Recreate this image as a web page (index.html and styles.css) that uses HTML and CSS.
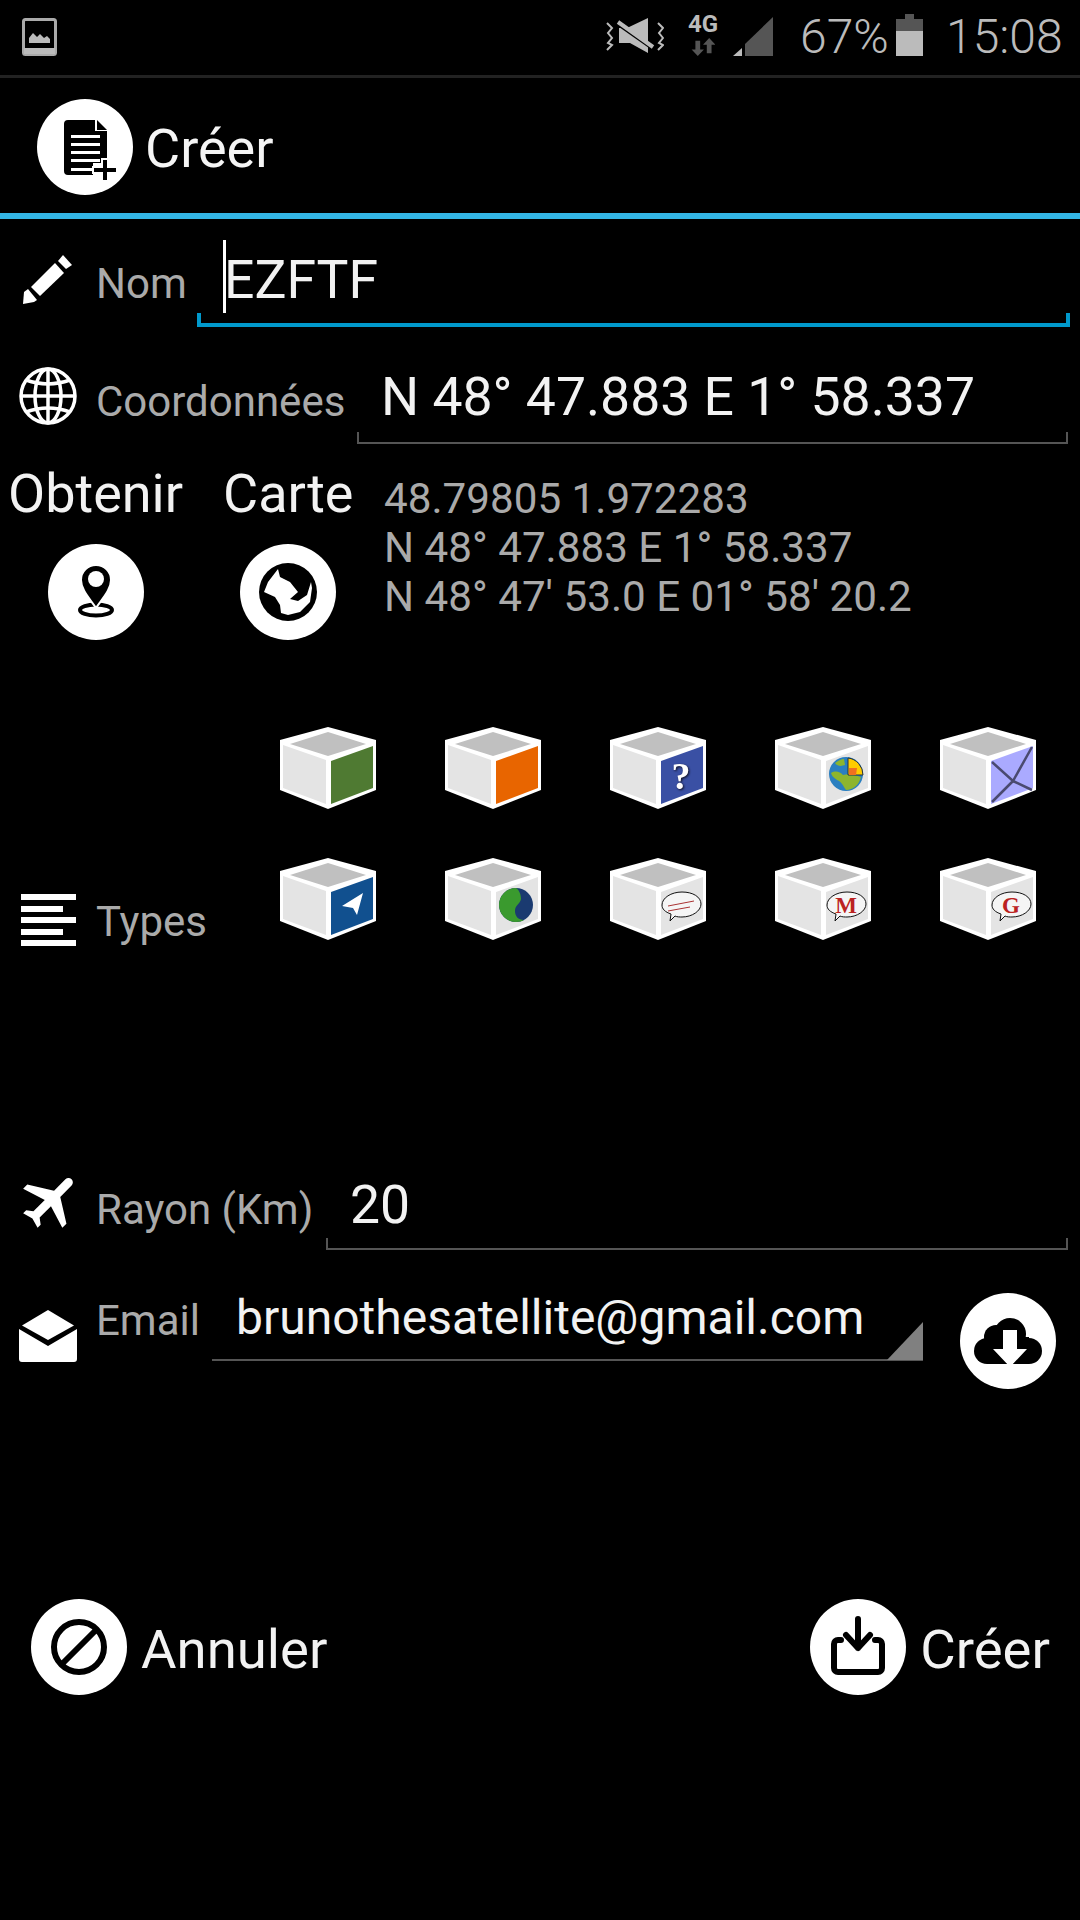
FILE: index.html
```html
<!DOCTYPE html>
<html lang="fr">
<head>
<meta charset="utf-8">
<title>Créer</title>
<link rel="stylesheet" href="styles.css">
</head>
<body>
<svg class="defs" width="0" height="0">
  <symbol id="cube" viewBox="0 0 96 82">
    <polygon class="c-edge" points="0,13 48,0 96,13 96,63 48,82 0,63"/>
    <polygon class="c-top" points="48,5 86,17 48,29 10,17"/>
    <polygon class="c-left" points="3,18 46,33 46,77 3,61"/>
  </symbol>
</svg>
<div class="app">
  <div class="status">
    <svg class="st-image" viewBox="0 0 35 38"><rect x="1.500" y="1.500" width="32" height="35" rx="2" class="st-stroke"/><rect x="2" y="30" width="31" height="6" class="st-fill"/><path class="st-fill" d="M7 25v-5l4-5 4 4 3-3 4 4 3-2 3 3v4z"/></svg>
    <svg class="st-mute" viewBox="0 0 60 40"><polygon class="st-fill" points="15,12 23,12 44,2 44,37 26,27 15,27"/><line x1="12" y1="7" x2="49" y2="33" class="st-gap"/><line x1="14" y1="6" x2="49" y2="31" class="st-line"/><polyline class="st-wave" points="3,7 8,12 4,17 8,22 4,27 8,29 3,34"/><polyline class="st-wave" points="54,7 59,12 55,17 59,22 55,27 59,29 54,34"/></svg>
    <div class="st-net">
      <span class="st-4g">4G</span>
      <svg class="st-arrows" viewBox="0 0 24 20"><path class="st-dark" d="M4 3h5v9h4l-6.500 7L0 12h4z"/><path class="st-dark" d="M16 16h5V7h4l-6.500-7L12 7h4z"/></svg>
    </div>
    <svg class="st-signal" viewBox="0 0 40 40"><polygon class="st-fill" points="0,39 9,31 9,39"/><polygon class="st-dark" points="12,39 12,27 40,0 40,39"/></svg>
    <span class="st-text st-pct">67%</span>
    <svg class="st-batt" viewBox="0 0 27 42"><rect x="9" y="0" width="9" height="6" class="st-dark"/><rect x="0" y="5" width="27" height="12" class="st-dark"/><rect x="0" y="17" width="27" height="25" class="st-fill"/></svg>
    <span class="st-text st-time">15:08</span>
  </div>

  <header class="header">
    <svg class="circle" viewBox="0 0 96 96"><path class="k-fill" d="M31 21h27v11h12v32H56v12H31a4 4 0 0 1-4-4V25a4 4 0 0 1 4-4z"/><path class="k-fill" d="M60 21l10 10H60z"/><g class="w-bars"><rect x="34" y="36" width="29" height="3"/><rect x="34" y="44" width="29" height="3"/><rect x="34" y="52" width="29" height="3"/><rect x="34" y="60" width="29" height="3"/><rect x="34" y="69" width="22" height="3"/></g><path class="k-plus" d="M65 60h6v8h9v6h-9v8h-6v-8h-9v-6h9z"/></svg>
    <span class="title">Créer</span>
  </header>

  <div class="row row-nom">
    <div class="icon-cell ic-nom"><svg class="i-pencil" viewBox="0 0 50 50"><path class="w-fill" d="M0 49l1-12 4-3 9 11-3 2z"/><path class="w-fill" d="M8 32L32 8l9 10-24 23z"/><path class="w-fill" d="M35 6l5-6 9 10-6 4z"/></svg></div>
    <span class="label lb-nom">Nom</span>
    <div class="field focus fd-nom"><i class="caret"></i>EZFTF</div>
  </div>

  <div class="row row-coord">
    <div class="icon-cell ic-coord"><svg class="i-globe" viewBox="0 0 58 58"><g class="w-wire"><circle cx="29" cy="29" r="27"/><ellipse cx="29" cy="29" rx="13" ry="27"/><line x1="29" y1="2" x2="29" y2="56"/><line x1="2" y1="29" x2="56" y2="29"/><path d="M7 13c14 5 30 5 44 0M7 45c14-5 30-5 44 0"/></g></svg></div>
    <span class="label lb-coord">Coordonnées</span>
    <div class="field fd-coord">N 48° 47.883 E 1° 58.337</div>
  </div>

  <div class="row row-action">
    <div class="act act-1">
      <span class="act-text">Obtenir</span>
      <svg class="circle" viewBox="0 0 96 96"><ellipse class="k-ring" cx="48" cy="66" rx="16" ry="5.500"/><path class="k-pin" d="M48 64C42 55 33 46 33 36a15 15 0 0 1 30 0c0 10-9 19-15 28z"/><circle cx="48" cy="35" r="8" class="w-fill"/></svg>
    </div>
    <div class="act act-2">
      <span class="act-text">Carte</span>
      <svg class="circle" viewBox="0 0 96 96"><circle cx="48" cy="48" r="29" class="k-fill"/><path class="w-fill" d="M38 25l2 8 10 5 8 10-8 7 8 2 9-6 4-13 1 6-2 14-10 10-12 3-7-2-1-8-5-8-11-5 4-10z"/></svg>
    </div>
    <div class="coord-list">
      <span>48.79805 1.972283</span>
      <span>N 48° 47.883 E 1° 58.337</span>
      <span>N 48° 47' 53.0 E 01° 58' 20.2</span>
    </div>
  </div>

  <div class="row row-types">
    <div class="icon-cell ic-types"><svg class="i-lines" viewBox="0 0 55 52"><g class="w-fill"><rect width="55" height="6" y="0"/><rect width="42" height="6" y="12"/><rect width="55" height="6" y="23"/><rect width="42" height="6" y="35"/><rect width="55" height="6" y="46"/></g></svg></div>
    <span class="label lb-types">Types</span>
    <div class="cubes">
      <svg class="cube" viewBox="0 0 96 82"><use href="#cube"/><polygon class="f-green" points="51,34 93,19 93,61 51,77"/></svg>
      <svg class="cube" viewBox="0 0 96 82"><use href="#cube"/><polygon class="f-orange" points="51,34 93,19 93,61 51,77"/></svg>
      <svg class="cube" viewBox="0 0 96 82"><use href="#cube"/><polygon class="f-indigo" points="51,34 93,19 93,61 51,77"/><text class="t-q" x="71" y="62">?</text></svg>
      <svg class="cube" viewBox="0 0 96 82"><use href="#cube"/><polygon class="c-left" points="51,34 93,19 93,61 51,77"/><circle cx="71" cy="47" r="17" class="g-sea"/><path class="g-land" d="M56 46c5-3 9-1 12 2 6-2 12 0 18 2-2 8-8 13-15 13-3-4-4-8-9-10-2-2-5-3-6-7z"/><path class="g-land" d="M60 36c3-2 6-4 9-4l1 6c-3 1-7 2-10-2z"/><path class="g-pie" d="M73 31a17 17 0 0 1 15 17H73z"/><path class="g-slice" d="M74 41h8l-1 7h-7z"/></svg>
      <svg class="cube" viewBox="0 0 96 82"><use href="#cube"/><polygon class="f-lilac" points="51,34 93,19 93,61 51,77"/><path class="m-line" d="M52 35l21 19L92 20M73 54L52 75M73 54l19 9"/></svg>
      <svg class="cube" viewBox="0 0 96 82"><use href="#cube"/><polygon class="f-blue" points="51,34 93,19 93,61 51,77"/><polygon class="w-fill" points="62,48 83,35 77,57 73,50"/></svg>
      <svg class="cube" viewBox="0 0 96 82"><use href="#cube"/><polygon class="c-left" points="51,34 93,19 93,61 51,77"/><circle cx="71" cy="47" r="17" class="y-navy"/><path class="y-green" d="M71 30a17 17 0 0 0 0 34c4 0 6-1 8-2-6 0-9-4-9-9 0-6 5-7 6-12 0-5-2-9-5-11z"/></svg>
      <svg class="cube soft" viewBox="0 0 96 82"><use href="#cube"/><polygon class="c-left" points="51,34 93,19 93,61 51,77"/><path class="b-bubble" d="M52 47c0-7 9-13 20-13s19 5 19 12-9 13-19 13c-2 0-5 0-7-1l-5 5 1-7c-6-2-9-5-9-9z"/><path class="b-red" d="M58 48l26-5M58 53l22-4"/></svg>
      <svg class="cube soft" viewBox="0 0 96 82"><use href="#cube"/><polygon class="c-left" points="51,34 93,19 93,61 51,77"/><path class="b-bubble" d="M52 47c0-7 9-13 20-13s19 5 19 12-9 13-19 13c-2 0-5 0-7-1l-5 5 1-7c-6-2-9-5-9-9z"/><text class="t-b" x="71" y="55">M</text></svg>
      <svg class="cube soft" viewBox="0 0 96 82"><use href="#cube"/><polygon class="c-left" points="51,34 93,19 93,61 51,77"/><path class="b-bubble" d="M52 47c0-7 9-13 20-13s19 5 19 12-9 13-19 13c-2 0-5 0-7-1l-5 5 1-7c-6-2-9-5-9-9z"/><text class="t-b" x="71" y="55">G</text></svg>
    </div>
  </div>

  <div class="row row-rayon">
    <div class="icon-cell ic-rayon"><svg class="i-plane" viewBox="0 0 24 24"><path class="w-fill plane" d="M21 16v-2l-8-5V3.500c0-.83-.67-1.500-1.500-1.500S10 2.670 10 3.500V9l-8 5v2l8-2.500V19l-2 1.500V22l3.500-1 3.500 1v-1.500L13 19v-5.500l8 2.500z"/></svg></div>
    <span class="label lb-rayon">Rayon (Km)</span>
    <div class="field fd-rayon">20</div>
  </div>

  <div class="row row-email">
    <div class="icon-cell ic-email"><svg class="i-env" viewBox="0 0 58 52"><path class="w-fill" d="M3 15.500L29 0l26 15.500L29 30z"/><path class="w-fill" d="M0 19l29 17 29-17v30a3 3 0 0 1-3 3H3a3 3 0 0 1-3-3z"/></svg></div>
    <span class="label lb-email">Email</span>
    <div class="field fd-email">brunothesatellite@gmail.com</div>
    <svg class="circle cloud" viewBox="0 0 96 96"><g class="k-fill"><circle cx="27" cy="58" r="13"/><circle cx="36" cy="44" r="12"/><circle cx="50" cy="41" r="16"/><circle cx="69" cy="58" r="13"/><rect x="27" y="44" width="42" height="27"/></g><path class="w-fill" d="M43 37h14v19h10L50 74 33 56h10z"/></svg>
  </div>

  <div class="row row-bottom">
    <div class="btn">
      <svg class="circle" viewBox="0 0 96 96"><circle cx="48" cy="48" r="25" class="k-stroke"/><line x1="30" y1="66" x2="66" y2="30" class="k-stroke"/></svg>
      <span class="btn-text">Annuler</span>
    </div>
    <div class="btn">
      <svg class="circle" viewBox="0 0 96 96"><path class="k-stroke round" d="M31 41h-3a4 4 0 0 0-4 4v24a4 4 0 0 0 4 4h40a4 4 0 0 0 4-4V45a4 4 0 0 0-4-4h-3"/><path class="k-stroke round" d="M48 20v29M36 36l12 13 12-13"/></svg>
      <span class="btn-text">Créer</span>
    </div>
  </div>
</div>
</body>
</html>
```

FILE: styles.css
```css
* { box-sizing: border-box; }
html, body { margin: 0; padding: 0; background: #000; }
body { font-family: Roboto, "Noto Sans", sans-serif; color: #f2f2f2; }
.defs { position: absolute; }
.app { width: 1080px; height: 1920px; display: flex; flex-direction: column; background: #000; overflow: hidden; }

/* status bar */
.status { height: 78px; border-bottom: 3px solid #222; display: flex; align-items: flex-start; position: relative; flex: none; padding-left: 22px; }
.st-image { width: 35px; height: 38px; margin-top: 18px; margin-right: 547px; flex: none; }
.st-mute { width: 60px; height: 40px; margin-top: 16px; margin-right: 21px; flex: none; }
.st-net { display: flex; flex-direction: column; align-items: center; width: 36px; margin-top: 12px; margin-right: 12px; flex: none; }
.st-4g { font-size: 24px; font-weight: 700; line-height: 25px; color: #bbb; }
.st-arrows { width: 24px; height: 19px; margin-top: 1px; }
.st-signal { width: 40px; height: 40px; margin-top: 17px; margin-right: 27px; flex: none; }
.st-text { font-size: 48px; font-weight: 300; line-height: 56px; color: #bbb; margin-top: 9px; white-space: nowrap; }
.st-pct { width: 96px; }
.st-batt { width: 27px; height: 42px; margin-top: 14px; margin-right: 23px; flex: none; }
.st-fill { fill: #bbb; }
.st-dark { fill: #555; }
.st-stroke { fill: none; stroke: #aaa; stroke-width: 3; }
.st-line { stroke: #bbb; stroke-width: 4; }
.st-gap { stroke: #000; stroke-width: 3; }
.st-wave { fill: none; stroke: #bbb; stroke-width: 2; }

/* header */
.header { height: 141px; border-bottom: 6px solid #33b5e5; display: flex; align-items: flex-start; padding-left: 37px; flex: none; }
.header .circle { margin-top: 21px; }
.circle { width: 96px; height: 96px; background: #fff; border-radius: 50%; flex: none; display: block; }
.title { font-size: 54px; line-height: 60px; margin-top: 41px; margin-left: 12px; color: #f5f5f5; }

/* shapes */
.k-fill { fill: #000; }
.w-fill { fill: #fff; }
.w-bars { fill: #fff; }
.k-plus { fill: #000; stroke: #fff; stroke-width: 2; }
.w-wire { fill: none; stroke: #fff; stroke-width: 3.500; }
.k-ring { fill: none; stroke: #000; stroke-width: 4; }
.k-pin { fill: #000; stroke: #fff; stroke-width: 2; }
.k-stroke { fill: none; stroke: #000; stroke-width: 6; }
.round { stroke-linecap: round; stroke-linejoin: round; }

/* rows */
.row { display: flex; align-items: flex-start; flex: none; }
.icon-cell { width: 96px; display: flex; justify-content: center; flex: none; }
.label { font-size: 42px; line-height: 60px; color: #aaa; white-space: nowrap; flex: none; }
.field { position: relative; font-size: 53.500px; line-height: 60px; color: #f2f2f2; padding-bottom: 13px; border-bottom: 2px solid #555; white-space: nowrap; flex: none; height: 75px; }
.field::before, .field::after { content: ""; position: absolute; bottom: 0; width: 2px; height: 10px; background: #555; }
.field::before { left: 0; }
.field::after { right: 0; }
.focus { border-bottom: 4px solid #09c; height: 77px; }
.focus::before, .focus::after { width: 4px; background: #09c; }
.caret { position: absolute; left: 26px; top: -10px; width: 3px; height: 73px; background: #fff; }

.row-nom { height: 112px; }
.ic-nom { margin-top: 36px; }
.i-pencil { width: 50px; height: 50px; }
.lb-nom { width: 101px; margin-top: 35px; }
.fd-nom { width: 873px; margin-top: 31px; padding-left: 27px; }

.row-coord { height: 116px; }
.ic-coord { margin-top: 36px; }
.i-globe { width: 58px; height: 58px; }
.lb-coord { width: 261px; margin-top: 41px; }
.fd-coord { width: 711px; margin-top: 36px; padding-left: 24px; height: 77px; padding-bottom: 15px; }

.row-action { height: 191px; padding-left: 8px; padding-top: 17px; }
.act { display: flex; flex-direction: column; flex: none; }
.act-text { font-size: 54px; line-height: 60px; white-space: nowrap; margin-bottom: 20px; color: #f2f2f2; }
.act-1 { width: 215px; }
.act-1 .circle { margin-left: 40px; }
.act-2 { width: 161px; }
.act-2 .circle { margin-left: 17px; }
.coord-list { display: flex; flex-direction: column; font-size: 42.200px; line-height: 49px; color: #aaa; margin-top: 10px; white-space: nowrap; }

.row-types { margin-top: 89px; height: 213px; }
.ic-types { margin-top: 167px; }
.i-lines { width: 55px; height: 52px; }
.lb-types { width: 184px; margin-top: 165px; }
.cubes { display: grid; grid-template-columns: repeat(5, 96px); column-gap: 69px; row-gap: 49px; }
.cube { width: 96px; height: 82px; display: block; }
.c-edge { fill: #fff; }
.soft .c-edge { fill: #f2f2f2; }
.c-top { fill: #c0c0c0; }
.c-left { fill: #e4e4e4; }
.f-green { fill: #4f7a32; }
.f-orange { fill: #e86500; }
.f-indigo { fill: #3a50a4; }
.f-lilac { fill: #aaaaff; }
.f-blue { fill: #11508f; }
.t-q { font-family: "Liberation Serif", serif; font-weight: 700; font-size: 38px; text-anchor: middle; fill: #fff; filter: drop-shadow(1px 1px 1px #112); }
.g-sea { fill: #2a7fc0; }
.g-land { fill: #8db52e; }
.g-pie { fill: #ffcc00; stroke: #234; stroke-width: 1; }
.g-slice { fill: #f07020; }
.m-line { fill: none; stroke: #4a4a70; stroke-width: 2.500; }
.y-navy { fill: #1a3a70; }
.y-green { fill: #3a9a2e; }
.b-bubble { fill: #f5f5f5; stroke: #111; stroke-width: 1; }
.b-red { fill: none; stroke: #a33; stroke-width: 1; }
.t-b { font-family: "Liberation Serif", serif; font-weight: 700; font-size: 23px; text-anchor: middle; fill: #b22; }

.row-rayon { margin-top: 220px; height: 90px; }
.ic-rayon { margin-top: 6px; }
.i-plane { width: 70px; height: 70px; flex: none; margin-left: 7px; }
.plane { transform: rotate(45deg); transform-origin: 12px 12px; }
.lb-rayon { width: 230px; margin-top: 20px; }
.fd-rayon { width: 742px; margin-top: 15px; padding-left: 24px; }

.row-email { height: 139px; position: relative; }
.ic-email { margin-top: 60px; }
.i-env { width: 58px; height: 52px; }
.lb-email { width: 116px; margin-top: 41px; }
.fd-email { width: 711px; margin-top: 38px; padding-left: 24px; font-size: 48px; height: 73px; padding-bottom: 11px; }
.fd-email::before { display: none; }
.fd-email::after { width: 36px; height: 38px; right: 0; bottom: -1px; background: #808080; clip-path: polygon(100% 0, 100% 100%, 0 100%); }
.cloud { margin-top: 43px; margin-left: 37px; }

.row-bottom { margin-top: 210px; justify-content: space-between; padding: 0 30px 0 31px; }
.btn { display: flex; align-items: center; }
.btn-text { font-size: 54.500px; line-height: 60px; margin-left: 14px; margin-top: 4px; color: #f2f2f2; }
```
